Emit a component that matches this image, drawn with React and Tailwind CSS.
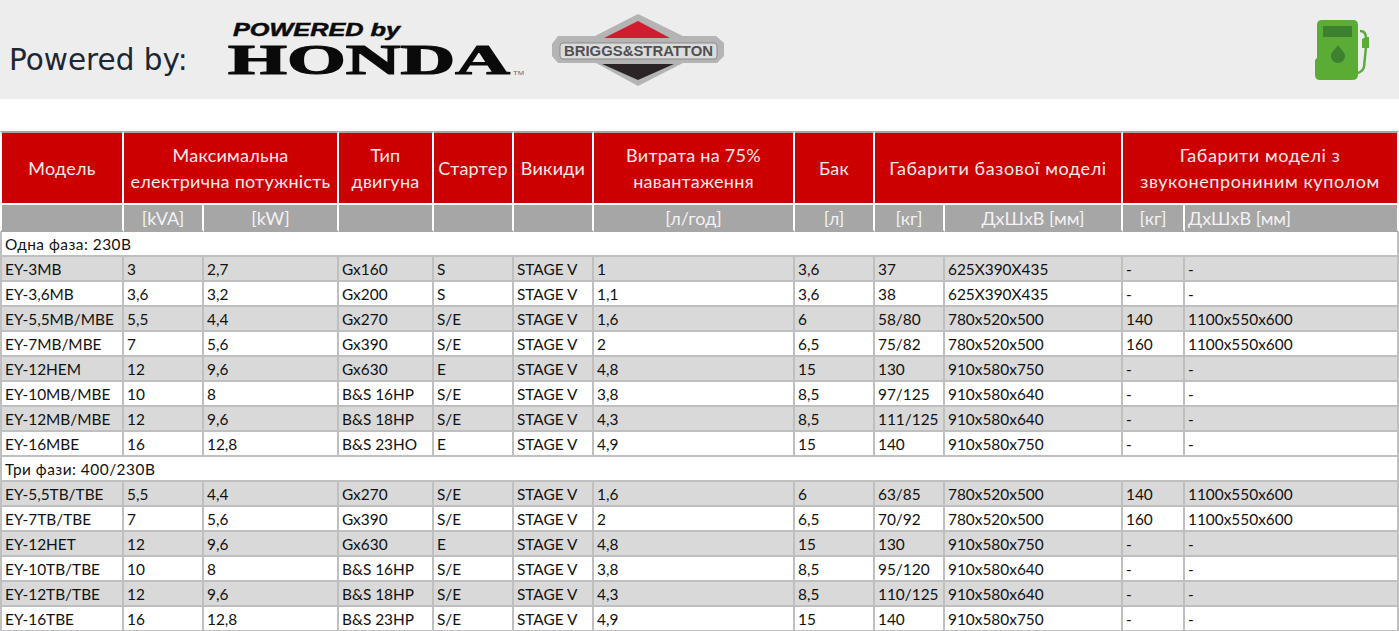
const font = { fontFamily: '"Lato", "Noto Sans", sans-serif' };

const singlePhase = [
  ['EY-3MB', '3', '2,7', 'Gx160', 'S', 'STAGE V', '1', '3,6', '37', '625X390X435', '-', '-'],
  ['EY-3,6MB', '3,6', '3,2', 'Gx200', 'S', 'STAGE V', '1,1', '3,6', '38', '625X390X435', '-', '-'],
  ['EY-5,5MB/MBE', '5,5', '4,4', 'Gx270', 'S/E', 'STAGE V', '1,6', '6', '58/80', '780x520x500', '140', '1100x550x600'],
  ['EY-7MB/MBE', '7', '5,6', 'Gx390', 'S/E', 'STAGE V', '2', '6,5', '75/82', '780x520x500', '160', '1100x550x600'],
  ['EY-12HEM', '12', '9,6', 'Gx630', 'E', 'STAGE V', '4,8', '15', '130', '910x580x750', '-', '-'],
  ['EY-10MB/MBE', '10', '8', 'B&S 16HP', 'S/E', 'STAGE V', '3,8', '8,5', '97/125', '910x580x640', '-', '-'],
  ['EY-12MB/MBE', '12', '9,6', 'B&S 18HP', 'S/E', 'STAGE V', '4,3', '8,5', '111/125', '910x580x640', '-', '-'],
  ['EY-16MBE', '16', '12,8', 'B&S 23HO', 'E', 'STAGE V', '4,9', '15', '140', '910x580x750', '-', '-'],
];

const threePhase = [
  ['EY-5,5TB/TBE', '5,5', '4,4', 'Gx270', 'S/E', 'STAGE V', '1,6', '6', '63/85', '780x520x500', '140', '1100x550x600'],
  ['EY-7TB/TBE', '7', '5,6', 'Gx390', 'S/E', 'STAGE V', '2', '6,5', '70/92', '780x520x500', '160', '1100x550x600'],
  ['EY-12HET', '12', '9,6', 'Gx630', 'E', 'STAGE V', '4,8', '15', '130', '910x580x750', '-', '-'],
  ['EY-10TB/TBE', '10', '8', 'B&S 16HP', 'S/E', 'STAGE V', '3,8', '8,5', '95/120', '910x580x640', '-', '-'],
  ['EY-12TB/TBE', '12', '9,6', 'B&S 18HP', 'S/E', 'STAGE V', '4,3', '8,5', '110/125', '910x580x640', '-', '-'],
  ['EY-16TBE', '16', '12,8', 'B&S 23HP', 'S/E', 'STAGE V', '4,9', '15', '140', '910x580x750', '-', '-'],
];

const colWidths = [124, 80, 135, 95, 80, 80, 201, 80, 70, 178, 62, 214];
const units = ['', '[kVA]', '[kW]', '', '', '', '[л/год]', '[л]', '[кг]', 'ДхШхВ [мм]', '[кг]', 'ДхШхВ [мм]'];

const HondaLogo = () => (
  <svg width="305" height="65" viewBox="225 15 305 65" className="shrink-0">
    <text x="233" y="34" textLength="167" lengthAdjust="spacingAndGlyphs" fontFamily="Liberation Sans" fontWeight="700" fontStyle="italic" fontSize="19" fill="#0c0c0c" stroke="#0c0c0c" strokeWidth="0.5">POWERED by</text>
    <text x="228" y="71.5" textLength="282" lengthAdjust="spacingAndGlyphs" fontFamily="Liberation Serif" fontWeight="700" fontSize="43" fill="#0a0a0a" stroke="#0a0a0a" strokeWidth="1.2">HONDA</text>
    <text x="513" y="73" textLength="11" lengthAdjust="spacingAndGlyphs" fontFamily="Liberation Sans" fontSize="6" fill="#666">TM</text>
  </svg>
);

const BriggsLogo = () => (
  <svg width="178" height="78" viewBox="550 10 178 78" className="shrink-0">
    <polygon points="552,43 558,35 595,35 638,13 683,35 716,35 724,42 724,55 717,62 683,62 638,85 596,62 558,62 552,55" fill="#b4b4b4" />
    <polygon points="604,37 638,20 670,37" fill="#d01c2e" />
    <polygon points="602,63 674,63 638,79" fill="#2a2426" />
    <rect x="560" y="42" width="157" height="16" rx="3" fill="#dcdcdc" stroke="#8a8a8a" strokeWidth="1" />
    <text x="564" y="55" textLength="149" lengthAdjust="spacingAndGlyphs" fontFamily="Liberation Sans" fontWeight="700" fontSize="14" fill="#505050">BRIGGS&amp;STRATTON</text>
  </svg>
);

const FuelIcon = () => (
  <svg width="60" height="68" viewBox="1312 15 60 68" className="shrink-0">
    <path d="M1322 19H1353Q1358 19 1358 24V74Q1358 79 1352 79H1320Q1315 79 1315 74V60Q1315 58 1317 57V24Q1317 19 1322 19Z" fill="#5aac35" />
    <rect x="1323" y="25" width="29" height="11" fill="#3c8030" />
    <path d="M1338 44C1341 49 1345 51 1345 55A7 7 0 0 1 1331 55C1331 51 1335 49 1338 44Z" fill="#3c8030" />
    <path d="M1360 30C1364 30 1366 33 1366 37M1366 46L1364 66Q1363 70 1358 72" fill="none" stroke="#5aac35" strokeWidth="2.5" />
    <path d="M1362 38L1366 36H1369V47H1362Z" fill="#5aac35" />
  </svg>
);

const DataRow = ({ row, striped }) => (
  <tr>
    {row.map((value, i) => (
      <td
        key={i}
        className={`h-[25px] overflow-hidden whitespace-nowrap border-r-2 border-b-2 border-[#bfbfbf] px-[3px] pt-[2px] pb-0 text-[15.4px] leading-[21px] text-[#111] ${i === 0 ? 'border-l-2' : ''} ${striped ? 'bg-[#d9d9d9]' : 'bg-white'}`}
      >
        {value}
      </td>
    ))}
  </tr>
);

const GroupRow = ({ label }) => (
  <tr>
    <td colSpan={12} className="h-[25px] border-x-2 border-b-2 border-[#bfbfbf] bg-white px-[3px] pt-[2px] pb-0 text-[15.4px] leading-[21px] tracking-[0.5px] text-[#111]">
      {label}
    </td>
  </tr>
);

const HeadCell = ({ children, span = 1, first, wide }) => (
  <th
    colSpan={span}
    className={`h-[74px] border-r-2 border-b-2 border-white bg-[#cc0000] p-0 text-center align-middle text-[18px] font-normal leading-[26px] text-[#fbeaea] ${wide ? 'tracking-[0.6px]' : 'tracking-[0.25px]'} ${first ? 'border-l-2' : ''}`}
  >
    {children}
  </th>
);

export default function App() {
  return (
    <div className="h-[631px] overflow-hidden bg-white" style={font}>
      {/* Logo bar */}
      <div className="flex h-[99px] items-center bg-[#ededed] pl-[9px] pr-[27px]">
        <span className="w-[216px] shrink-0 pt-[22px] text-[29.5px] leading-none text-[#1c2733]" style={{ fontFamily: '"DejaVu Sans", sans-serif' }}>
          Powered by:
        </span>
        <HondaLogo />
        <div className="ml-5">
          <BriggsLogo />
        </div>
        <div className="ml-auto">
          <FuelIcon />
        </div>
      </div>

      <div className="pt-8">
        <table className="w-[1399px] table-fixed border-separate border-spacing-0">
          <colgroup>
            {colWidths.map((w, i) => (
              <col key={i} style={{ width: w }} />
            ))}
          </colgroup>
          <thead>
            <tr className="[&>th]:border-t-2 [&>th]:border-t-[#a6a6a6]">
              <HeadCell first>Модель</HeadCell>
              <HeadCell span={2}>Максимальна<br />електрична потужність</HeadCell>
              <HeadCell>Тип<br />двигуна</HeadCell>
              <HeadCell>Стартер</HeadCell>
              <HeadCell>Викиди</HeadCell>
              <HeadCell>Витрата на 75%<br />навантаження</HeadCell>
              <HeadCell>Бак</HeadCell>
              <HeadCell span={2} wide>Габарити базової моделі</HeadCell>
              <HeadCell span={2} wide>Габарити моделі з<br />звуконепрониним куполом</HeadCell>
            </tr>
            <tr>
              {units.map((u, i) => (
                <th
                  key={i}
                  className={`h-[27px] border-r-2 border-b-2 border-r-white border-b-[#a6a6a6] bg-[#a6a6a6] px-0 pt-[2px] pb-0 text-[18px] font-normal leading-[23px] text-[#f2f2f2] ${i === 11 ? 'pl-[3px] text-left' : 'text-center'} ${i === 0 ? 'border-l-2 border-l-white' : ''}`}
                >
                  {u}
                </th>
              ))}
            </tr>
          </thead>
          <tbody>
            <GroupRow label="Одна фаза: 230В" />
            {singlePhase.map((row, i) => (
              <DataRow key={row[0]} row={row} striped={i % 2 === 0} />
            ))}
            <GroupRow label="Три фази: 400/230В" />
            {threePhase.map((row, i) => (
              <DataRow key={row[0]} row={row} striped={i % 2 === 0} />
            ))}
          </tbody>
        </table>
      </div>
    </div>
  );
}
